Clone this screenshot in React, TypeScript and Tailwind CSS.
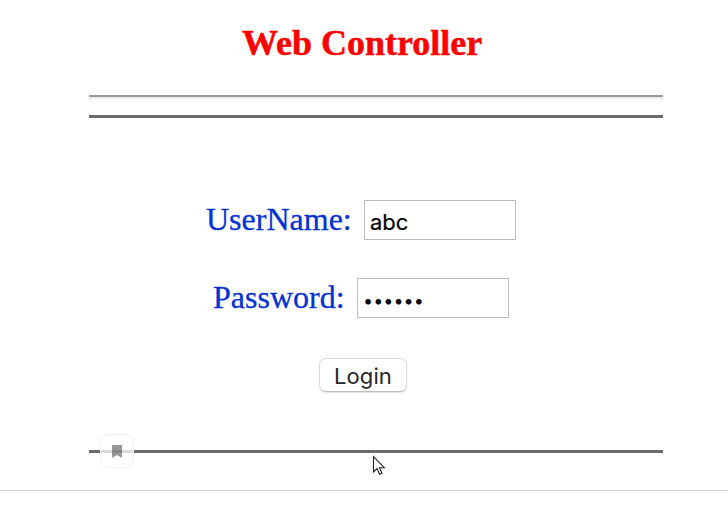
import React from "react";

export default function App() {
  return (
    <div className="relative h-[514px] w-[728px] overflow-hidden bg-white font-['Liberation_Serif',serif]">
      <header className="pt-[23px] pl-[242px]">
        <h1 className="h-10 text-[36px] leading-10 font-bold whitespace-nowrap text-[#ff0000] [-webkit-text-stroke:0.5px_#ff0000]">Web Controller</h1>
      </header>
      <main className="ml-[89px] w-[574px]">
        <div className="mt-8 h-1 border-t-2 border-b-2 border-t-[#999999] border-b-[#eeeeee]" />
        <div className="mt-4 h-[3px] bg-[#6b6b6b]" />
        <form className="flex flex-col" onSubmit={(e) => e.preventDefault()}>
          <div className="mt-[82px] ml-[117px] flex h-10">
            <label htmlFor="user" className="w-[158px] text-[32px] leading-[38px] whitespace-nowrap text-[#0433d0] [-webkit-text-stroke:0.3px_#0433d0]">UserName:</label>
            <input id="user" defaultValue="abc" className="h-10 w-[152px] border border-[#bdbdbd] bg-white pt-[3px] pl-[5px] font-['Inter',sans-serif] text-[22px] text-black outline-none [-webkit-text-stroke:0.2px_#000]" />
          </div>
          <div className="mt-[38px] ml-[124px] flex h-10">
            <label htmlFor="pass" className="w-36 text-[32px] leading-[38px] whitespace-nowrap text-[#0433d0] [-webkit-text-stroke:0.3px_#0433d0]">Password:</label>
            <input id="pass" type="password" defaultValue="abcdef" className="h-10 w-[152px] border border-[#bdbdbd] bg-white pt-[5px] pl-[5px] font-['Inter',sans-serif] text-[18px] text-black outline-none" />
          </div>
          <button className="mt-10 ml-[230px] h-[34px] w-[88px] rounded-[7px] border border-[#dadada] border-b-[#bebebe] bg-white pt-px font-['Inter',sans-serif] text-[22px] leading-8 tracking-[0.1px] text-[#262626] shadow-[0_1px_1px_rgba(0,0,0,0.12)]">Login</button>
        </form>
        <div className="mt-[58px] h-[3px] bg-[#6b6b6b]" />
      </main>
      <div className="mt-[37px] h-px bg-[#d3d3d3]" />
      <div className="absolute top-[434px] left-[100px] flex h-[34px] w-[34px] items-center justify-center rounded-[8px] border border-[#f2f2f2] bg-white/75">
        <svg width="10" height="13" viewBox="0 0 10 13" className="mt-px">
          <path d="M0 0H10V13L5 10L0 13Z" fill="#999999" />
          <path d="M0 5H10V8H0Z" fill="#858585" />
        </svg>
      </div>
      <svg className="absolute top-[455px] left-[372px]" width="14" height="21" viewBox="0 0 14 21">
        <path d="M1.5 1.5V17L5 13.5L7.7 19.2L10 18.2L7.5 12.7H12.3Z" fill="white" stroke="#20202c" strokeWidth="1.1" />
      </svg>
    </div>
  );
}
